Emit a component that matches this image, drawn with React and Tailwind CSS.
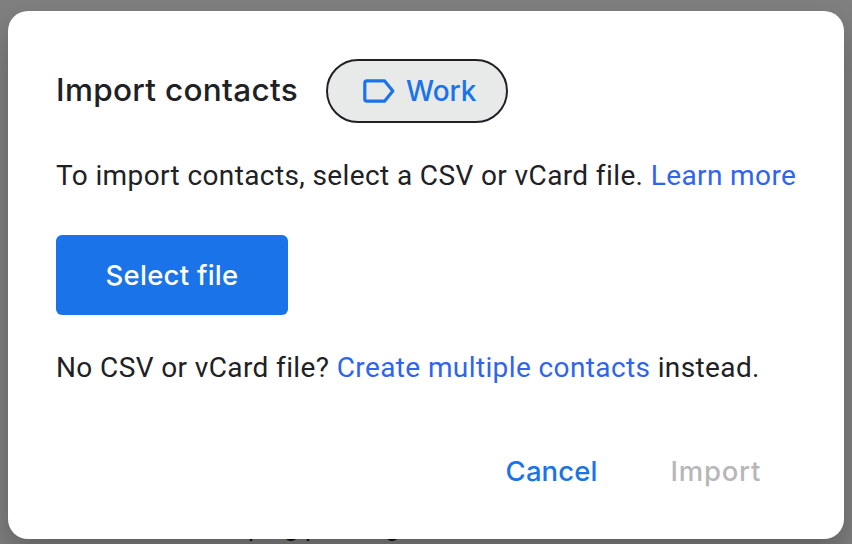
import React from "react";

export default function App() {
  return (
    <div className="relative h-[544px] w-[852px] overflow-hidden bg-[#808080] px-2 pt-[11px] font-[Roboto,sans-serif] text-[#202124]">
      <div className="absolute left-[248px] top-[512px] flex text-[26px] leading-[30px] text-[#101010]">
        <span className="w-[36px]">p</span>
        <span className="w-[21px]">g</span>
        <span className="w-[80px]">p</span>
        <span>g</span>
      </div>
      <main className="relative h-[528px] rounded-[20px] bg-white px-12 pt-12 shadow-[0_16px_32px_rgba(0,0,0,0.26)]">
        <header className="flex h-16 items-center">
          <h1 className="mb-0.5 w-[270px] whitespace-nowrap font-[Inter,sans-serif] text-[31.5px] font-medium tracking-[0.3px]">Import contacts</h1>
          <button className="flex h-16 w-[182px] items-center gap-[11px] rounded-full border-2 border-[#202124] bg-[#e8eaea] pl-[35px] font-[Inter,sans-serif] text-[28px] font-medium text-[#1a73e8]">
            <svg className="shrink-0" width="32" height="24" viewBox="0 0 32 24" fill="none" stroke="currentColor" strokeWidth="3.2" strokeLinejoin="round"><path d="M4 1.8H21.5L29.8 12L21.5 22.2H4Q1.8 22.2 1.8 20V4Q1.8 1.8 4 1.8Z" /></svg>
            Work
          </button>
        </header>
        <p className="mt-[33px] whitespace-nowrap text-[28px] leading-10 tracking-[0.385px]">To import contacts, select a CSV or vCard file. <a className="text-[#2f64ee]">Learn more</a></p>
        <button className="mt-[39px] h-20 w-[232px] rounded-[6px] bg-[#1a73e8] pt-0.5 font-[Inter,sans-serif] text-[27.5px] font-medium tracking-[0.25px] text-white">Select file</button>
        <p className="mt-[33px] whitespace-nowrap text-[28px] leading-10 tracking-[0.385px]">No CSV or vCard file? <a className="text-[#2f64ee]">Create multiple contacts</a> instead.</p>
        <footer className="mt-[64px] flex h-10 items-center justify-end gap-[73px] pr-[35px] font-[Inter,sans-serif] text-[27.5px] font-medium">
          <button className="tracking-[0.1px] text-[#1a73e8]">Cancel</button>
          <button className="tracking-[0.75px] text-[#b7b7b7]">Import</button>
        </footer>
      </main>
    </div>
  );
}
